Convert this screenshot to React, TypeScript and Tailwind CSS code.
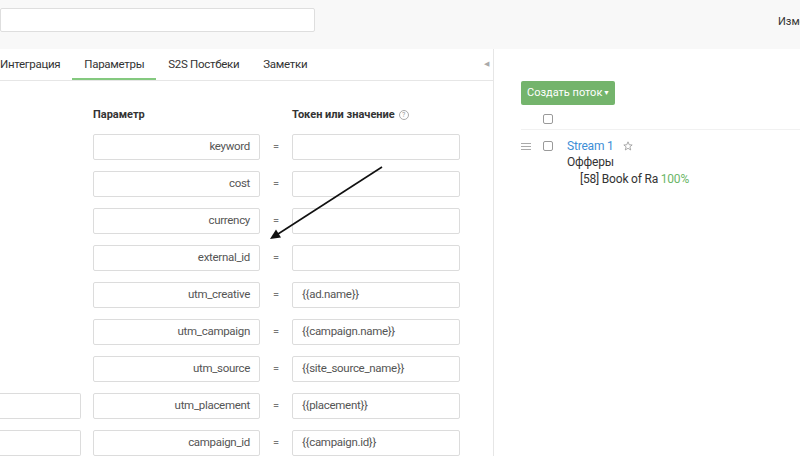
// Campaign editor — parameters tab with streams sidebar.
const rows = [
  { name: "keyword", value: "" },
  { name: "cost", value: "" },
  { name: "currency", value: "" },
  { name: "external_id", value: "" },
  { name: "utm_creative", value: "{{ad.name}}" },
  { name: "utm_campaign", value: "{{campaign.name}}" },
  { name: "utm_source", value: "{{site_source_name}}" },
  { name: "utm_placement", value: "{{placement}}", left: true },
  { name: "campaign_id", value: "{{campaign.id}}", left: true },
];

const tabs = ["Интеграция", "Параметры", "S2S Постбеки", "Заметки"];

function Checkbox() {
  return <div className="h-[10px] w-[10px] shrink-0 rounded-[2px] border border-[#9a9a9a] bg-white" />;
}

export default function App() {
  return (
    <div
      className="relative h-[460px] w-[800px] overflow-hidden bg-white text-[11px] text-[#333]"
      style={{ fontFamily: "Roboto, 'Liberation Sans', sans-serif" }}
    >
      {/* top strip */}
      <div className="flex h-[49px] items-start bg-[#f8f8f8]">
        <div className="mt-[8px] h-[24px] w-[315px] shrink-0 rounded-[2px] border border-[#dedede] bg-white" />
        <span className="ml-[463px] mt-[14px] shrink-0 whitespace-nowrap text-[11px] text-[#333]">Изменить</span>
      </div>

      <div className="flex">
        {/* left panel */}
        <div className="w-[494px] shrink-0 border-r border-[#e6e6e6]">
          <div className="relative flex h-[32px] items-stretch border-b border-[#e6e6e6]">
            <div className="-ml-[12px] flex">
              {tabs.map((t) => (
                <div
                  key={t}
                  className={
                    t === "Параметры"
                      ? "flex items-center border-b-2 border-[#84c97f] px-3 pt-[2px] text-[11.5px] tracking-[-0.3px] text-[#333]"
                      : "flex items-center border-b-2 border-transparent px-3 pt-[2px] text-[11.5px] tracking-[-0.3px] text-[#333]"
                  }
                >
                  {t}
                </div>
              ))}
            </div>
            <span className="ml-auto mr-[4px] self-center text-[7px] text-[#aaa]">◀</span>
          </div>

          <div className="pt-[24px]">
            <div className="flex h-[20px] items-center font-bold text-[#333]">
              <div className="ml-[93px] w-[199px]">Параметр</div>
              <div className="flex items-center gap-[4px]">
                Токен или значение
                <span className="flex h-[10px] w-[10px] items-center justify-center rounded-full border border-[#aaa] text-[7px] font-normal text-[#999]">
                  ?
                </span>
              </div>
            </div>

            <div className="mt-[9px] flex flex-col gap-[11px]">
              {rows.map((r) => (
                <div key={r.name} className="flex h-[26px] items-stretch">
                  <div className="w-[93px] shrink-0">
                    {r.left && <div className="h-full w-[81px] rounded-r-[2px] border border-l-0 border-[#dcdcdc]" />}
                  </div>
                  <div className="flex w-[167px] items-center justify-end rounded-[2px] border border-[#dcdcdc] pr-[9px] text-[11.5px] tracking-[-0.3px] text-[#555]">
                    {r.name}
                  </div>
                  <div className="flex w-[32px] items-center justify-center text-[#777]">=</div>
                  <div className="flex w-[168px] items-center rounded-[2px] border border-[#dcdcdc] pl-[9px] text-[11.5px] tracking-[-0.3px] text-[#555]">
                    {r.value}
                  </div>
                </div>
              ))}
            </div>
          </div>
        </div>

        {/* right panel: streams */}
        <div className="flex-1 pl-[27px] pt-[32px]">
          <div className="flex h-[24px] w-[94px] items-center whitespace-nowrap rounded-[2px] bg-[#74b46c] pl-[6px] text-[11px] text-white">
            Создать поток
            <span className="ml-auto mr-[5px] text-[7px]">▼</span>
          </div>
          <div className="flex h-[25px] items-center border-b border-[#f1f1f1] pl-[22px] pt-[4px]">
            <Checkbox />
          </div>
          <div className="pt-[10px] leading-[16px]">
            <div className="flex h-[12px] items-center">
              <div className="flex w-[22px] flex-col gap-[2px]">
                <div className="h-px w-[10px] bg-[#aaa]" />
                <div className="h-px w-[10px] bg-[#aaa]" />
                <div className="h-px w-[10px] bg-[#aaa]" />
              </div>
              <Checkbox />
              <span className="ml-[14px] text-[12px] tracking-[-0.2px] text-[#3d8ed6]">Stream 1</span>
              <svg className="ml-[9px]" width="10" height="10" viewBox="0 0 24 24" fill="none" stroke="#9a9a9a" strokeWidth="2" strokeLinejoin="round">
                <polygon points="12,2 15,9 22,9.5 16.5,14 18.5,21.5 12,17.5 5.5,21.5 7.5,14 2,9.5 9,9" />
              </svg>
            </div>
            <div className="ml-[46px] mt-[2px] text-[12px] tracking-[-0.2px]">Офферы</div>
            <div className="ml-[59px] mt-[1px] text-[12px] tracking-[-0.2px]">
              [58] Book of Ra <span className="text-[#6bb667]">100%</span>
            </div>
          </div>
        </div>
      </div>

      {/* annotation arrow */}
      <svg className="pointer-events-none absolute left-0 top-0" width="800" height="460">
        <line x1="382" y1="167" x2="278" y2="234" stroke="#111" strokeWidth="1.6" />
        <polygon points="270,239 281,237.5 276,229.5" fill="#111" />
      </svg>
    </div>
  );
}
